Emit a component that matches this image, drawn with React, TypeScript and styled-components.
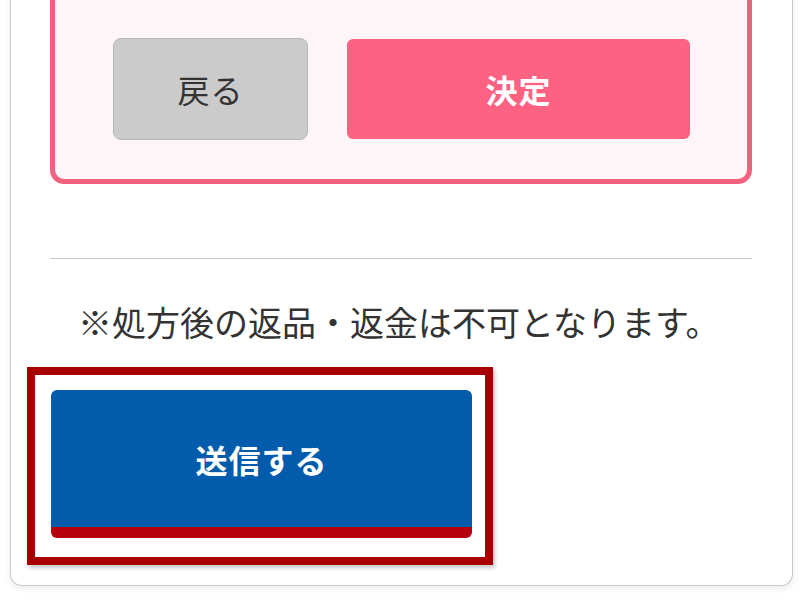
import React, { FC } from 'react'
import styled, { createGlobalStyle } from 'styled-components'

const GlobalStyle = createGlobalStyle`
  html, body {
    margin: 0;
    padding: 0;
    background: #ffffff;
    font-family: "Noto Sans CJK JP", "Noto Sans", sans-serif;
    color: #333333;
    overflow: hidden;
  }
`

const Page = styled.div`
  width: 800px;
  height: 601px;
  overflow: hidden;
`

const Card = styled.div`
  margin: -5px 0 0 10px;
  width: 783px;
  box-sizing: border-box;
  padding: 0 40px 20px 39px;
  background: #ffffff;
  border: 1px solid #c9c9c9;
  border-top: none;
  border-radius: 0 0 12px 12px;
  box-shadow: 0 3px 6px rgba(0, 0, 0, 0.08);
`

const ConfirmBox = styled.div`
  box-sizing: border-box;
  background: #fdf5f8;
  border: 5px solid #f3617f;
  border-radius: 0 0 14px 14px;
  padding: 38px 57px 39px 58px;
`

const ButtonRow = styled.div`
  display: grid;
  grid-template-columns: 195px 1fr;
  gap: 39px;
  align-items: center;
`

const ChoiceButton = styled.button<{ primary?: boolean }>`
  box-sizing: border-box;
  display: flex;
  align-items: center;
  justify-content: center;
  height: ${({ primary }) => (primary ? '100px' : '102px')};
  margin: 0;
  padding: 0;
  font-family: inherit;
  font-size: 32px;
  letter-spacing: 1px;
  cursor: pointer;
  ${({ primary }) =>
    primary
      ? `
    background: #fe6282;
    color: #ffffff;
    font-weight: 700;
    border: none;
    border-radius: 6px;
  `
      : `
    background: #cbcbcb;
    color: #333333;
    font-weight: 400;
    border: 1.5px solid #b6b6b6;
    border-radius: 8px;
  `}
`

const Divider = styled.hr`
  margin: 74px 0 0;
  border: none;
  border-top: 1.5px solid #c8c8c8;
`

const Notice = styled.p`
  margin: 37px 0 0;
  padding-left: 28px;
  font-size: 34px;
  line-height: 1.5;
  color: #333333;
  white-space: nowrap;
`

const Highlight = styled.div`
  box-sizing: border-box;
  width: 466px;
  margin: 20px 0 0 -23px;
  padding: 15px 13px 19px 16px;
  border: 8px solid #a80000;
  box-shadow: 2px 3px 4px rgba(0, 0, 0, 0.22);
`

const SubmitButton = styled.button`
  box-sizing: border-box;
  display: flex;
  align-items: center;
  justify-content: center;
  width: 100%;
  height: 148px;
  margin: 0;
  padding: 0;
  background: #035cab;
  color: #ffffff;
  border: none;
  border-bottom: 11px solid #b6000d;
  border-radius: 6px;
  font-family: inherit;
  font-size: 32px;
  font-weight: 700;
  letter-spacing: 1px;
  cursor: pointer;
`

const App: FC = () => (
  <Page>
    <GlobalStyle />
    <Card>
      <ConfirmBox>
        <ButtonRow>
          <ChoiceButton>戻る</ChoiceButton>
          <ChoiceButton primary>決定</ChoiceButton>
        </ButtonRow>
      </ConfirmBox>

      <Divider />

      <Notice>※処方後の返品・返金は不可となります。</Notice>

      <Highlight>
        <SubmitButton>送信する</SubmitButton>
      </Highlight>
    </Card>
  </Page>
)

export default App
